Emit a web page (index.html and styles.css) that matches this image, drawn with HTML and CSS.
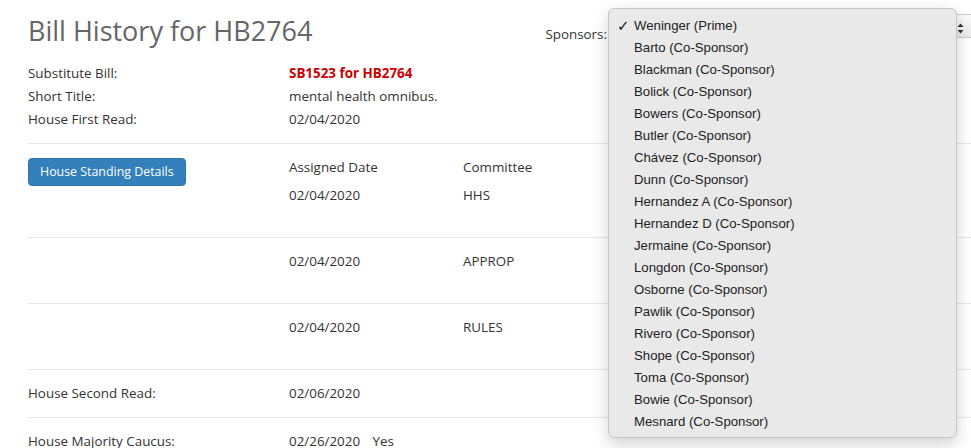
FILE: index.html
```html
<!DOCTYPE html>
<html lang="en">
<head>
    <meta charset="UTF-8">
    <meta name="viewport" content="width=device-width, initial-scale=1.0">
    <title>Bill History for HB2764</title>
    <link rel="stylesheet" href="styles.css">
</head>
<body>
    <div class="page">
        <div class="head">
            <h1>Bill History for HB2764</h1>
            <div class="sponsors">
                <span class="sponsors-label">Sponsors:</span>
                <div class="select">
                    <span class="select-arrows">
                        <svg width="7" height="11" viewBox="0 0 7 11"><path d="M3.5 0.5 L6.5 4 H0.5 Z M3.5 10.5 L0.5 7 H6.5 Z" fill="#333"/></svg>
                    </span>
                </div>
            </div>
        </div>

        <div class="info">
            <div class="info-row"><span class="label">Substitute Bill:</span><a class="bill-link" href="#">SB1523 for HB2764</a></div>
            <div class="info-row"><span class="label">Short Title:</span><span>mental health omnibus.</span></div>
            <div class="info-row"><span class="label">House First Read:</span><span>02/04/2020</span></div>
        </div>

        <!-- committee assignments -->
        <div class="sect committee first">
            <div class="button-cell"><button class="standing-button">House Standing Details</button></div>
            <div class="col-head">Assigned Date</div>
            <div class="col-head">Committee</div>
            <div class="cell-gap">02/04/2020</div>
            <div class="cell-gap">HHS</div>
        </div>
        <div class="sect committee">
            <div></div>
            <div>02/04/2020</div>
            <div>APPROP</div>
        </div>
        <div class="sect committee">
            <div></div>
            <div>02/04/2020</div>
            <div>RULES</div>
        </div>

        <div class="sect simple">
            <div>House Second Read:</div>
            <div>02/06/2020</div>
        </div>
        <div class="sect simple">
            <div>House Majority Caucus:</div>
            <div>02/26/2020 <span class="vote">Yes</span></div>
        </div>
    </div>

    <!-- open sponsor select menu -->
    <div class="menu">
        <div class="menu-item checked">Weninger (Prime)</div>
        <div class="menu-item">Barto (Co-Sponsor)</div>
        <div class="menu-item">Blackman (Co-Sponsor)</div>
        <div class="menu-item">Bolick (Co-Sponsor)</div>
        <div class="menu-item">Bowers (Co-Sponsor)</div>
        <div class="menu-item">Butler (Co-Sponsor)</div>
        <div class="menu-item">Chávez (Co-Sponsor)</div>
        <div class="menu-item">Dunn (Co-Sponsor)</div>
        <div class="menu-item">Hernandez A (Co-Sponsor)</div>
        <div class="menu-item">Hernandez D (Co-Sponsor)</div>
        <div class="menu-item">Jermaine (Co-Sponsor)</div>
        <div class="menu-item">Longdon (Co-Sponsor)</div>
        <div class="menu-item">Osborne (Co-Sponsor)</div>
        <div class="menu-item">Pawlik (Co-Sponsor)</div>
        <div class="menu-item">Rivero (Co-Sponsor)</div>
        <div class="menu-item">Shope (Co-Sponsor)</div>
        <div class="menu-item">Toma (Co-Sponsor)</div>
        <div class="menu-item">Bowie (Co-Sponsor)</div>
        <div class="menu-item">Mesnard (Co-Sponsor)</div>
    </div>
</body>
</html>
```

FILE: styles.css
```css
body {
    margin: 0;
    background: #fff;
    color: #333;
    font-family: "Open Sans", Arial, sans-serif;
    font-size: 13.4px;
    overflow: hidden;
}
.page {
    width: 947px;
    padding-left: 28px;
}
.head {
    display: flex;
    align-items: flex-start;
}
.head h1 {
    margin: 15px 0 0;
    font-size: 27px;
    font-weight: 400;
    line-height: 31px;
    color: #666;
}
.sponsors {
    margin-left: auto;
    display: flex;
    align-items: flex-start;
    padding-top: 14px;
}
.sponsors-label {
    margin-top: 11px;
    margin-right: 4px;
    line-height: 18px;
}
.select {
    width: 362px;
    height: 22px;
    border: 1px solid #c9c9c9;
    border-radius: 4px;
    background: linear-gradient(#fafafa, #ececec);
    position: relative;
}
.select-arrows {
    position: absolute;
    right: 10px;
    top: 5px;
}
.info {
    margin-top: 16px;
    padding-bottom: 12px;
}
.info-row {
    display: grid;
    grid-template-columns: 261px 1fr;
    line-height: 23px;
}
.bill-link {
    color: #cc0000;
    font-weight: 700;
    text-decoration: none;
}
.sect {
    border-top: 1px solid #e6e6e6;
    line-height: 20px;
}
.committee {
    display: grid;
    grid-template-columns: 261px 174px 1fr;
    padding: 13px 0 32px;
}
.button-cell {
    grid-row: span 2;
}
.cell-gap {
    margin-top: 8px;
}
.simple {
    display: grid;
    grid-template-columns: 261px 1fr;
    padding: 13px 0 14px;
}
.vote {
    margin-left: 9px;
}
.standing-button {
    margin-top: 1px;
    background: #3380bb;
    color: #fff;
    border: 1px solid #2e75ad;
    border-radius: 4px;
    font-family: "Open Sans", Arial, sans-serif;
    font-size: 12.4px;
    line-height: 18px;
    padding: 4px 11px;
    cursor: pointer;
}
.menu {
    position: absolute;
    left: 608px;
    top: 8px;
    width: 347px;
    padding: 6px 0 4px;
    background: #e9e9e9;
    border: 1px solid #c6c6c6;
    border-radius: 6px;
    box-shadow: 0 6px 16px rgba(0,0,0,0.18);
    font-family: "Liberation Sans", Arial, sans-serif;
    font-size: 13.2px;
    color: #222;
}
.menu-item {
    height: 22px;
    line-height: 22px;
    padding-left: 25px;
    position: relative;
}
.menu-item.checked::before {
    content: "✓";
    position: absolute;
    left: 8px;
    font-size: 15px;
    font-weight: 700;
    font-family: "DejaVu Sans", sans-serif;
}
```
